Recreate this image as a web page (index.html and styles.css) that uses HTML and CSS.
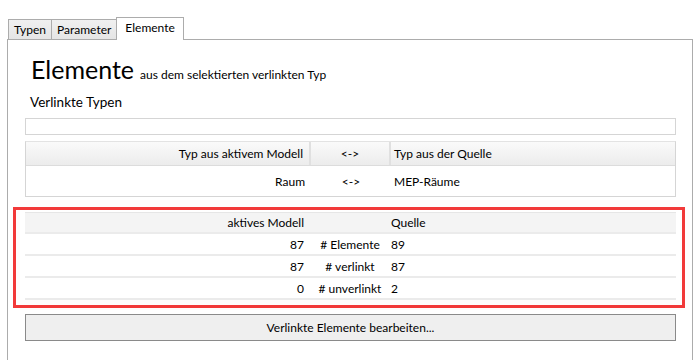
FILE: index.html
```html
<!DOCTYPE html>
<html lang="de">
<head>
  <meta charset="UTF-8" />
  <title>Elemente</title>
  <link rel="stylesheet" href="styles.css">
</head>
<body>
  <div class="tabs">
    <div class="tab">Typen</div>
    <div class="tab">Parameter</div>
    <div class="tab active">Elemente</div>
  </div>

  <div class="panel">
    <div class="title">
      <span class="big">Elemente</span>
      <span class="sub">aus dem selektierten verlinkten Typ</span>
    </div>
    <div class="section">Verlinkte Typen</div>
    <div class="emptybox"></div>

    <div class="grid types">
      <div class="row head">
        <div class="c1">Typ aus aktivem Modell</div>
        <div class="c2">&lt;-&gt;</div>
        <div class="c3">Typ aus der Quelle</div>
      </div>
      <div class="row">
        <div class="c1">Raum</div>
        <div class="c2">&lt;-&gt;</div>
        <div class="c3">MEP-Räume</div>
      </div>
    </div>

    <div class="highlight">
      <div class="stats">
        <div class="row head">
          <div class="c1">aktives Modell</div>
          <div class="c2"></div>
          <div class="c3">Quelle</div>
        </div>
        <div class="row">
          <div class="c1">87</div>
          <div class="c2"># Elemente</div>
          <div class="c3">89</div>
        </div>
        <div class="row">
          <div class="c1">87</div>
          <div class="c2"># verlinkt</div>
          <div class="c3">87</div>
        </div>
        <div class="row">
          <div class="c1">0</div>
          <div class="c2"># unverlinkt</div>
          <div class="c3">2</div>
        </div>
      </div>
    </div>

    <button class="edit">Verlinkte Elemente bearbeiten...</button>
  </div>
</body>
</html>
```

FILE: styles.css
```css
body {
  margin: 0;
  font-family: 'Lato', sans-serif;
  font-size: 12px;
  color: #000;
  background: #fff;
  height: 360px;
  overflow: hidden;
}

.tabs {
  display: flex;
  align-items: flex-end;
  padding: 17px 0 0 8px;
  height: 22px;
  position: relative;
  z-index: 1;
}

.tab {
  height: 19px;
  line-height: 19px;
  padding: 0 5px;
  border: 1px solid #acacac;
  border-bottom: none;
  border-right: none;
  background: linear-gradient(to bottom, #f0f0f0, #e5e5e5);
}

.tab.active {
  height: 22px;
  line-height: 20px;
  padding: 0 8px;
  background: #fff;
  border-right: 1px solid #acacac;
  margin-bottom: -1px;
}

.panel {
  margin-left: 7px;
  width: 686px;
  height: 330px;
  border: 1px solid #acacac;
  border-bottom: none;
  padding: 0 16px 0 17px;
  box-sizing: border-box;
}

.title {
  display: flex;
  align-items: baseline;
  gap: 6px;
  padding: 12px 0 0 6px;
  height: 38px;
}

.big {
  font-size: 25px;
  line-height: 34px;
}

.sub {
  font-size: 12px;
}

.section {
  font-size: 13.5px;
  padding: 4px 0 0 5px;
  height: 22px;
}

.emptybox {
  height: 15px;
  border: 1px solid #d5d5d5;
  margin-top: 2px;
}

.grid {
  margin-top: 6px;
  border: 1px solid #d5d5d5;
  border-top-color: #e3e3e3;
}

.row {
  display: flex;
  height: 22px;
  box-sizing: border-box;
  align-items: center;
  border-bottom: 2px solid #ebebeb;
}

.row > div {
  box-sizing: border-box;
}

.row .c1 {
  width: 285px;
  text-align: right;
  padding-right: 6px;
}

.row .c2 {
  width: 80px;
  text-align: center;
}

.row .c3 {
  flex: 1;
  padding-left: 1px;
}

.types .row .c3 {
  padding-left: 3px;
}

.types .row {
  border-bottom: none;
  height: 30px;
}

.types .row.head {
  height: 24px;
  border-bottom: 1px solid #dcdcdc;
  background: linear-gradient(to bottom, #fafafa, #ececec);
  align-items: stretch;
}

.types .row.head > div {
  display: flex;
  align-items: center;
  border-right: 2px solid #e0e0e0;
}

.types .row.head .c1 {
  justify-content: flex-end;
}

.types .row.head .c2 {
  justify-content: center;
}

.types .row.head .c3 {
  border-right: none;
}

.highlight {
  margin: 10px -9px 0 -12px;
  border: 3px solid #f23a3a;
  padding: 2px 6px 5px 9px;
}

.stats .row.head {
  background: #f4f4f4;
  border-top: 1px solid #e6e6e6;
}

.edit {
  display: block;
  width: 100%;
  margin-top: 6px;
  height: 27px;
  font-family: inherit;
  font-size: 12px;
  color: #000;
  background: #efefef;
  border: 1px solid #8a8a8a;
}
```
